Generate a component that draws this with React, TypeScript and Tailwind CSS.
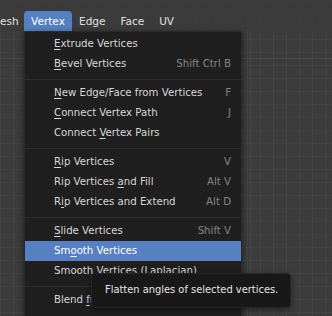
const font = { fontFamily: '"DejaVu Sans", "Liberation Sans", sans-serif' }

type Item =
  | { sep: true }
  | { sep?: false; label: [string, string, string]; key?: string; active?: boolean }

// label is split around the underlined mnemonic letter
const ITEMS: Item[] = [
  { label: ['', 'E', 'xtrude Vertices'] },
  { label: ['', 'B', 'evel Vertices'], key: 'Shift Ctrl B' },
  { sep: true },
  { label: ['', 'N', 'ew Edge/Face from Vertices'], key: 'F' },
  { label: ['', 'C', 'onnect Vertex Path'], key: 'J' },
  { label: ['Connect ', 'V', 'ertex Pairs'] },
  { sep: true },
  { label: ['', 'R', 'ip Vertices'], key: 'V' },
  { label: ['Rip Vertices ', 'a', 'nd Fill'], key: 'Alt V' },
  { label: ['R', 'i', 'p Vertices and Extend'], key: 'Alt D' },
  { sep: true },
  { label: ['', 'S', 'lide Vertices'], key: 'Shift V' },
  { label: ['Sm', 'o', 'oth Vertices'], active: true },
  { label: ['Smooth Vertices (Laplacian)', '', ''] },
  { sep: true },
  { label: ['Blend ', 'f', 'rom Shape'] },
]

export default function App() {
  return (
    <div
      className="relative w-[332px] h-[316px] overflow-hidden bg-[#3c3c3c] text-[10.2px]"
      style={font}
    >
      {/* viewport grid */}
      <div className="absolute inset-0 bg-[linear-gradient(to_right,#444444_1px,transparent_1px),linear-gradient(to_bottom,#434343_1px,transparent_1px)] bg-[size:13px_13px]" />
      <div className="absolute left-0 right-0 top-[58px] h-px bg-[#4a4a4a]" />
      <div className="absolute top-0 bottom-0 left-[250px] w-px bg-[#474747]" />

      {/* header menus */}
      <div className="relative flex h-[32px] items-end bg-[#3a3a3a]/70 text-[#e0e0e0] text-[10.5px]">
        <div className="flex h-[21px] w-[33px] shrink-0 items-center ml-[-9px]">Mesh</div>
        <div className="flex h-[21px] w-[48px] shrink-0 items-center justify-center rounded-t-[4px] bg-[#5680c2] text-white">
          Vertex
        </div>
        <div className="flex h-[21px] items-center pl-[7px] pr-[8px]">Edge</div>
        <div className="flex h-[21px] items-center pl-[7px] pr-[8px]">Face</div>
        <div className="flex h-[21px] items-center pl-[7px] pr-[7px]">UV</div>
      </div>

      {/* dropdown */}
      <div className="absolute left-[24px] top-[31px] w-[218px] h-[290px] border border-[#2a2a2a] bg-[#1f1f1f] pt-[2px] text-[#d8d8d8] shadow-[0_2px_6px_rgba(0,0,0,0.5)]">
        {ITEMS.map((it, i) =>
          it.sep ? (
            <div key={i} className="h-[9px] pt-[5px]">
              <div className="h-px bg-[#2f2f2f]" />
            </div>
          ) : (
            <div
              key={i}
              className={`flex h-[20px] items-center justify-between pl-[29px] pr-[10px] ${
                it.active ? 'bg-[#5680c2] text-white' : ''
              }`}
            >
              <span className="whitespace-nowrap">
                {it.label[0]}
                <span className="underline underline-offset-[2px]">{it.label[1]}</span>
                {it.label[2]}
              </span>
              {it.key && <span className="text-[#858585]">{it.key}</span>}
            </div>
          ),
        )}
      </div>

      {/* tooltip */}
      <div className="absolute left-[91px] top-[273px] flex h-[35px] w-[200px] items-center whitespace-nowrap rounded-[4px] border border-[#262626] bg-[#181818] pl-[13px] text-[9.9px] text-[#e6e6e6] shadow-[0_2px_6px_rgba(0,0,0,0.4)]">
        Flatten angles of selected vertices.
      </div>
    </div>
  )
}
